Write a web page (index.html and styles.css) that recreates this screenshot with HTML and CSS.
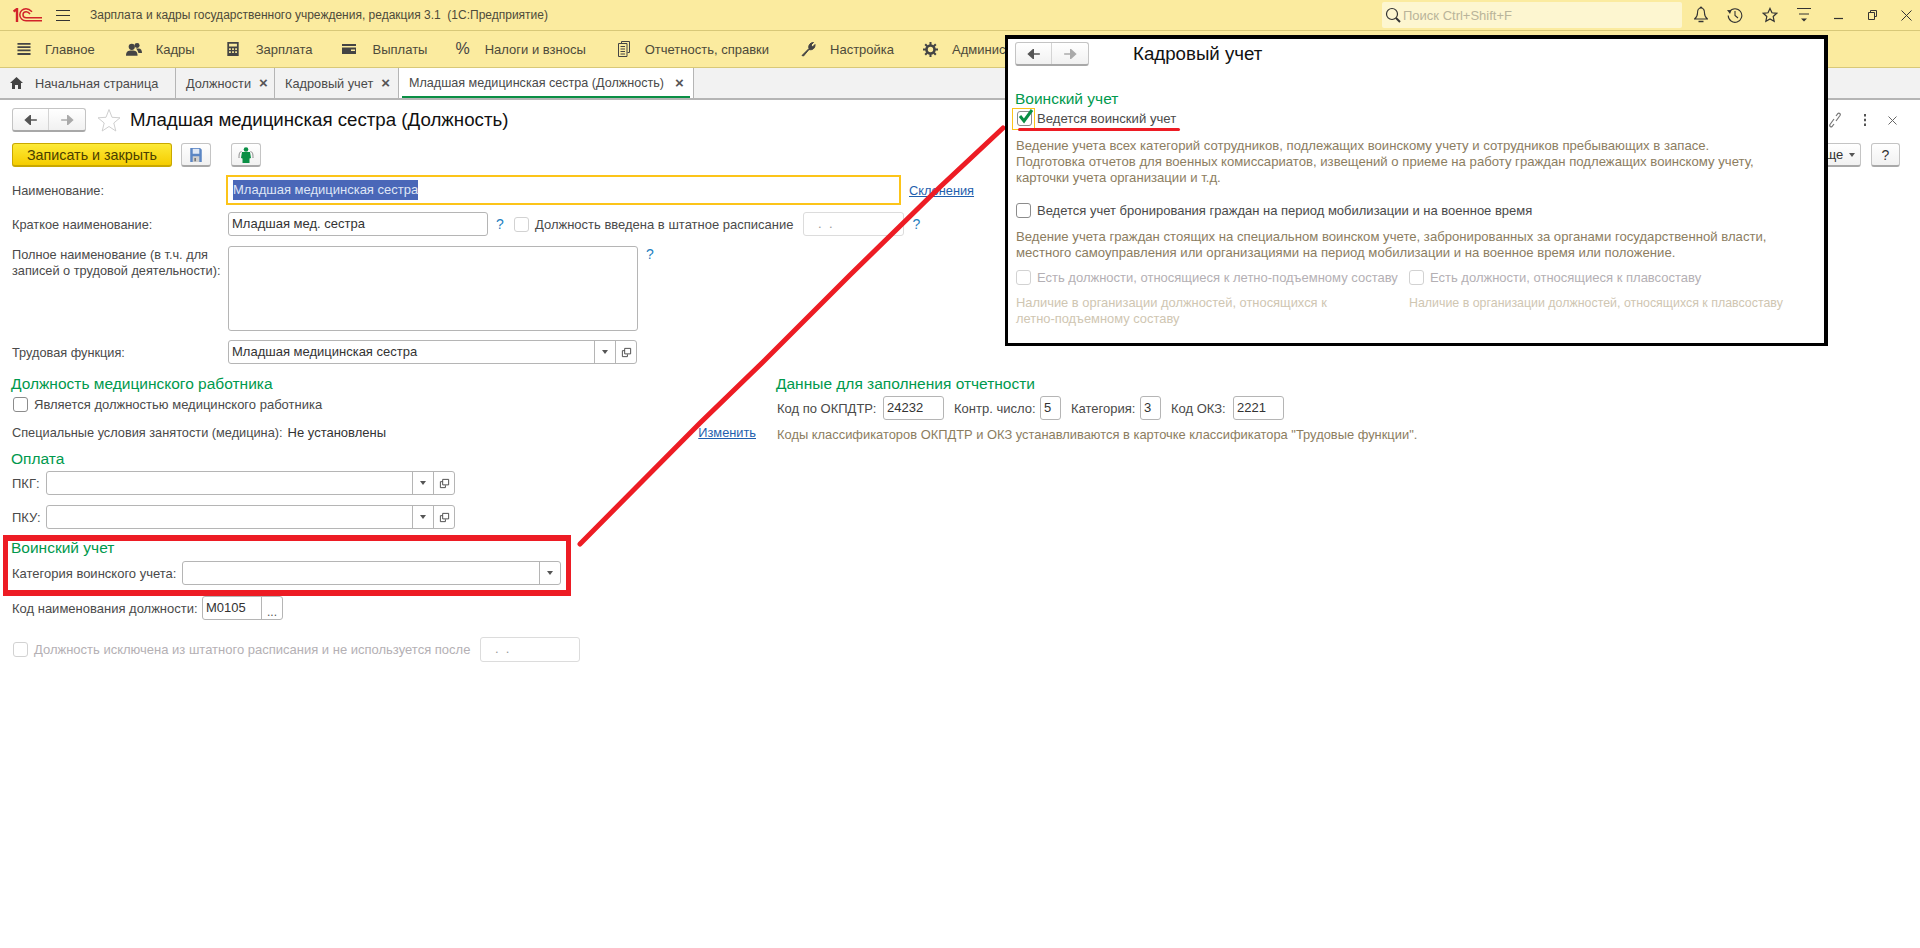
FILE: index.html
```html
<!DOCTYPE html>
<html lang="ru">
<head>
    <meta charset="UTF-8">
    <title>Младшая медицинская сестра (Должность)</title>
    <link rel="stylesheet" href="styles.css">
</head>
<body>
    <svg width="0" height="0" class="defs">
        <symbol id="arrow-left" viewBox="0 0 16 12"><path d="M1 6h14M7 1L1.500 6 7 11z" fill="currentColor" stroke="currentColor" stroke-width="2"/></symbol>
        <symbol id="arrow-right" viewBox="0 0 16 12"><path d="M15 6H1M9 1l5.500 5L9 11z" fill="currentColor" stroke="currentColor" stroke-width="2"/></symbol>
        <symbol id="open" viewBox="0 0 12 12"><path d="M4 1.500h6.500v6H4zM4 4H1.500v6.500H7V8" fill="none" stroke="#444" stroke-width="1"/></symbol>
    </svg>

    <header class="titlebar">
        <svg class="logo" width="29" height="14" viewBox="0 0 29 14">
            <path d="M0.500 3.500L4 1V14" fill="none" stroke="#d2232a" stroke-width="2.400"/>
            <path d="M19 3.800C17 1.800 15.500 .8 13 .8 9.500 .8 6.800 3.500 6.800 6.800S9.500 12.800 13 12.800H29" fill="none" stroke="#d2232a" stroke-width="1.500"/>
            <path d="M17 6C16 4.500 15 3.800 13.200 3.800 11.500 3.800 10 5 10 6.800S11.500 9.800 13.200 9.800H29" fill="none" stroke="#d2232a" stroke-width="1.500"/>
        </svg>
        <svg class="burger" width="14" height="11" viewBox="0 0 14 11"><path d="M0 .5h14M0 5.500h14M0 10.500h14" stroke="#333" stroke-width="1"/></svg>
        <span class="app-name">Зарплата и кадры государственного учреждения, редакция 3.1&nbsp; (1С:Предприятие)</span>
        <div class="search">
            <svg width="17" height="17" viewBox="0 0 17 17"><circle cx="7" cy="7" r="5.500" fill="none" stroke="#333" stroke-width="1.200"/><path d="M11 11l4 4" stroke="#333" stroke-width="2"/></svg>
            <span>Поиск Ctrl+Shift+F</span>
        </div>
        <div class="sys-icons">
            <svg width="14" height="18" viewBox="0 0 14 18"><path d="M7 2C4.500 2 3.500 4 3.500 7c0 2.500-1 4.500-3 6h13c-2-1.500-3-3.500-3-6 0-3-1-5-3.500-5zM6 2c0-1.300 2-1.300 2 0" fill="none" stroke="#333" stroke-width="1.100"/><path d="M4.500 15.500h5" stroke="#333" stroke-width="1.500"/></svg>
            <svg width="16" height="16" viewBox="0 0 16 16"><path d="M2.500 4.500A6.800 6.800 0 1 1 1.200 8.500M8 4v4.500l3 2.500" fill="none" stroke="#333" stroke-width="1.100"/><path d="M0 3l4.500 .3L3 7z" fill="#333"/></svg>
            <svg width="16" height="16" viewBox="0 0 17 17"><path d="M8.500 1.500l2.100 4.600 5 .6-3.700 3.400 1 5-4.400-2.500-4.400 2.500 1-5L1.400 6.700l5-.6z" fill="none" stroke="#333" stroke-width="1.300"/></svg>
            <svg width="14" height="18" viewBox="0 0 14 18"><path d="M0 2.500h14M2 8h10" stroke="#333" stroke-width="1"/><path d="M4 12.500h6l-3 3z" fill="#333"/></svg>
            <svg class="win-min" width="9" height="12" viewBox="0 0 9 12"><path d="M0 9.500h9" stroke="#333" stroke-width="1.200"/></svg>
            <svg class="win-restore" width="9" height="10" viewBox="0 0 9 10"><path d="M2.500 2V.5h6v6H7M.5 2.500h6v7h-6z" fill="none" stroke="#333" stroke-width="1"/></svg>
            <svg class="win-close" width="11" height="11" viewBox="0 0 11 11"><path d="M.5.5l10 10M10.500.5l-10 10" stroke="#333" stroke-width="1"/></svg>
        </div>
    </header>

    <nav class="menubar">
        <a class="menu-item item-main"><svg width="14" height="14" viewBox="0 0 14 15"><path d="M0 2h14M0 5.500h14M0 9h14M0 12.800h14" stroke="#444" stroke-width="2"/></svg>Главное</a>
        <a class="menu-item item-staff"><svg width="16" height="15" viewBox="0 0 18 16"><circle cx="6.500" cy="5" r="3.500" fill="#444"/><path d="M0 15c0-5 2-6 6.500-6s6.500 1 6.500 6z" fill="#444"/><circle cx="12.500" cy="3.500" r="2.800" fill="#444"/><path d="M11 7h3c3 0 4 2 4 5h-4c-.5-2-1.500-4-3-5z" fill="#444"/></svg>Кадры</a>
        <a class="menu-item item-pay"><svg width="12" height="14" viewBox="0 0 13 16"><path fill-rule="evenodd" d="M0 0h13v16H0zM2 2v3h9V2zM2 7v2h2V7zM5.500 7v2h2V7zM9 7v2h2V7zM2 10.500v2h2v-2zM5.500 10.500v2h2v-2zM9 10.500v2h2v-2z" fill="#444"/></svg>Зарплата</a>
        <a class="menu-item item-out"><svg width="14" height="10" viewBox="0 0 14 10"><path fill-rule="evenodd" d="M0 0h14v2H0zM0 3.500h14V10H0zM9 5.500v1.500h4V5.500z" fill="#444"/></svg>Выплаты</a>
        <a class="menu-item item-tax"><span class="percent">%</span>Налоги и взносы</a>
        <a class="menu-item item-rep"><svg width="12" height="16" viewBox="0 0 12 16"><path d="M3.500 2.500V.5h8v11h-2M.5 2.500h8.500v13H.5zM2.500 5.500h4.500M2.500 8h4.500M2.500 10.500h4.500M2.500 13h4.500" fill="none" stroke="#444" stroke-width="1"/></svg>Отчетность, справки</a>
        <a class="menu-item item-set"><svg width="16" height="16" viewBox="0 0 16 16"><path d="M2 14.500L9 7.500c-1-2 .5-6 4.500-6L11 4l1.500 2L15 3.500c.3 4-3 6-6 5l-5.500 6.500z" fill="#444" stroke="#444"/></svg>Настройка</a>
        <a class="menu-item item-adm"><svg width="15" height="15" viewBox="0 0 15 15"><circle cx="7.500" cy="7.500" r="4" fill="none" stroke="#444" stroke-width="2.600"/><path d="M7.500 0v3M7.500 12v3M0 7.500h3M12 7.500h3M2.200 2.200l2 2M10.800 10.800l2 2M12.800 2.200l-2 2M4.200 10.800l-2 2" stroke="#444" stroke-width="2"/></svg>Администрирование</a>
    </nav>

    <div class="tabs">
        <div class="tab tab-home"><svg width="13" height="12" viewBox="0 0 13 12"><path d="M6.500 0L0 6h2v6h3V8h3v4h3V6h2z" fill="#444"/></svg>Начальная страница</div>
        <div class="tab tab-pos">Должности<span class="tab-close">×</span></div>
        <div class="tab tab-hr">Кадровый учет<span class="tab-close">×</span></div>
        <div class="tab tab-active">Младшая медицинская сестра (Должность)<span class="tab-close">×</span></div>
    </div>

    <main class="content">
        <div class="form-head">
            <div class="nav-group">
                <span class="nav-btn nav-back"><svg width="14" height="10"><use href="#arrow-left"/></svg></span>
                <span class="nav-btn nav-next"><svg width="14" height="10"><use href="#arrow-right"/></svg></span>
            </div>
            <svg class="fav" width="24" height="24" viewBox="0 0 24 24"><path d="M12 1.500l3 7.800 8 .5-6.200 5.200 2 8L12 18.500 5.200 23l2-8L1 9.800l8-.5z" fill="#fff" stroke="#cfcfcf" stroke-width="1"/></svg>
            <h1 class="form-title">Младшая медицинская сестра (Должность)</h1>
            <div class="head-icons">
                <svg width="14" height="16" viewBox="0 0 14 16"><path d="M8 4l2-2.500c1-1 3 .5 2 2L8 9M6 12l-2 2.500c-1 1-3-.5-2-2L6 7" fill="none" stroke="#777" stroke-width="1.200"/></svg>
                <svg width="4" height="12" viewBox="0 0 4 12"><path d="M2 0v2.500M2 4.700v2.500M2 9.500V12" stroke="#555" stroke-width="2"/></svg>
                <svg width="9" height="9" viewBox="0 0 9 9"><path d="M.5.5l8 8M8.500.5l-8 8" stroke="#666" stroke-width="1"/></svg>
            </div>
        </div>

        <div class="toolbar">
            <button class="btn btn-primary">Записать и закрыть</button>
            <button class="btn btn-icon btn-save">
                <svg width="12" height="14" viewBox="0 0 14 17"><path d="M0 0h12l2 2v15H0z" fill="#5b86c4"/><path d="M3 1h8v6H3z" fill="#dfe8f5"/><path d="M3 10h8v7H3z" fill="#cfcfcf"/><path d="M5 12h2v4H5z" fill="#777"/></svg>
            </button>
            <button class="btn btn-icon btn-person">
                <svg width="16" height="16" viewBox="0 0 16 16"><path d="M3.500 4.500C1.500 5 1 6.500 1 11M12.500 4.500c2 .5 2.500 2 2.500 6.500" fill="none" stroke="#888" stroke-width="1"/><circle cx="8" cy="2.500" r="2.300" fill="#0a8f45"/><path d="M4 5h8l1 6-1.500 .5V16h-7v-4.500L3 11z" fill="#0a8f45"/></svg>
            </button>
            <div class="toolbar-right">
                <button class="btn btn-more">Еще<i class="caret"></i></button>
                <button class="btn btn-help">?</button>
            </div>
        </div>

        <div class="row row-name">
            <label class="label label-top">Наименование:</label>
            <div class="field field-focus"><span class="selected">Младшая медицинская сестра</span></div>
            <a class="link link-decl">Склонения</a>
        </div>
        <div class="row row-short">
            <label class="label">Краткое наименование:</label>
            <div class="field field-short">Младшая мед. сестра</div>
            <span class="hint-mark">?</span>
            <span class="check check-off check-staff"></span>
            <span class="check-text">Должность введена в штатное расписание</span>
            <div class="field field-date field-off">&nbsp;.&nbsp;&nbsp;.</div>
            <span class="hint-mark">?</span>
        </div>
        <div class="row row-full">
            <label class="label label-two">Полное наименование (в т.ч. для записей о трудовой деятельности):</label>
            <div class="field field-area"></div>
            <span class="hint-mark hint-area">?</span>
        </div>
        <div class="row row-func">
            <label class="label">Трудовая функция:</label>
            <div class="field field-combo field-func">
                <span class="combo-text">Младшая медицинская сестра</span>
                <span class="combo-btn"><i class="caret"></i></span>
                <span class="combo-btn"><svg width="11" height="11"><use href="#open"/></svg></span>
            </div>
        </div>

        <div class="columns">
            <section class="col-left">
                <h2 class="group">Должность медицинского работника</h2>
                <div class="check-row">
                    <span class="check"></span>
                    <span class="check-text">Является должностью медицинского работника</span>
                </div>
                <div class="special-row">
                    <span class="label-special">Специальные условия занятости (медицина):</span>
                    <span class="value">Не установлены</span>
                    <a class="link link-change">Изменить</a>
                </div>
                <h2 class="group group-pay">Оплата</h2>
                <div class="row row-pkg">
                    <label class="label-plain">ПКГ:</label>
                    <div class="field field-combo field-pkg">
                        <span class="combo-text"></span>
                        <span class="combo-btn"><i class="caret"></i></span>
                        <span class="combo-btn"><svg width="11" height="11"><use href="#open"/></svg></span>
                    </div>
                </div>
                <div class="row row-pku">
                    <label class="label-plain">ПКУ:</label>
                    <div class="field field-combo field-pkg">
                        <span class="combo-text"></span>
                        <span class="combo-btn"><i class="caret"></i></span>
                        <span class="combo-btn"><svg width="11" height="11"><use href="#open"/></svg></span>
                    </div>
                </div>
                <h2 class="group group-war">Воинский учет</h2>
                <div class="row row-cat">
                    <label class="label-plain">Категория воинского учета:</label>
                    <div class="field field-combo field-cat">
                        <span class="combo-text"></span>
                        <span class="combo-btn"><i class="caret"></i></span>
                    </div>
                </div>
                <div class="row row-code">
                    <label class="label-plain">Код наименования должности:</label>
                    <div class="field field-combo field-code">
                        <span class="combo-text">М0105</span>
                        <span class="combo-btn dots">...</span>
                    </div>
                </div>
                <div class="row row-excl">
                    <span class="check check-off"></span>
                    <span class="check-text text-off">Должность исключена из штатного расписания и не используется после</span>
                    <div class="field field-date field-off field-excl">&nbsp;.&nbsp;&nbsp;.</div>
                </div>
            </section>

            <section class="col-right">
                <h2 class="group">Данные для заполнения отчетности</h2>
                <div class="row row-codes">
                    <label class="label-plain code-a">Код по ОКПДТР:</label>
                    <div class="field field-code-a">24232</div>
                    <label class="label-plain code-b">Контр. число:</label>
                    <div class="field field-code-b">5</div>
                    <label class="label-plain code-c">Категория:</label>
                    <div class="field field-code-b">3</div>
                    <label class="label-plain code-d">Код ОКЗ:</label>
                    <div class="field field-code-c">2221</div>
                </div>
                <p class="note note-codes">Коды классификаторов ОКПДТР и ОКЗ устанавливаются в карточке классификатора "Трудовые функции".</p>
            </section>
        </div>
    </main>

    <!-- red marks drawn on top of the screenshot -->
    <svg class="mark-line" width="1920" height="948" viewBox="0 0 1920 948">
        <path d="M580 544L700 423 765 360 850 275 940 187 1003 128" fill="none" stroke="#ed1c24" stroke-width="5" stroke-linecap="round"/>
    </svg>
    <div class="mark-box"></div>

    <aside class="inset">
        <div class="inset-head">
            <div class="nav-group">
                <span class="nav-btn nav-back"><svg width="14" height="10"><use href="#arrow-left"/></svg></span>
                <span class="nav-btn nav-next"><svg width="14" height="10"><use href="#arrow-right"/></svg></span>
            </div>
            <h2 class="inset-title">Кадровый учет</h2>
        </div>
        <h2 class="group inset-group">Воинский учет</h2>
        <div class="check-row inset-check-a">
            <span class="check-focus">
                <span class="check check-on">
                    <svg width="16" height="15" viewBox="0 0 16 15"><path d="M2 7l4 5 8-11" fill="none" stroke="#0a8f45" stroke-width="3"/></svg>
                </span>
            </span>
            <span class="check-text">Ведется воинский учет</span>
            <i class="mark-under"></i>
        </div>
        <p class="note inset-note inset-note-a">Ведение учета всех категорий сотрудников, подлежащих воинскому учету и сотрудников пребывающих в запасе.<br>Подготовка отчетов для военных комиссариатов, извещений о приеме на работу граждан подлежащих воинскому учету,<br>карточки учета организации и т.д.</p>
        <div class="check-row inset-check-b">
            <span class="check"></span>
            <span class="check-text">Ведется учет бронирования граждан на период мобилизации и на военное время</span>
        </div>
        <p class="note inset-note inset-note-b">Ведение учета граждан стоящих на специальном воинском учете, забронированных за органами государственной власти,<br>местного самоуправления или организациями на период мобилизации и на военное время или положение.</p>
        <div class="inset-cols">
            <div class="inset-col">
                <div class="check-row">
                    <span class="check check-off"></span>
                    <span class="check-text text-off">Есть должности, относящиеся к летно-подъемному составу</span>
                </div>
                <p class="note note-off">Наличие в организации должностей, относящихся к<br>летно-подъемному составу</p>
            </div>
            <div class="inset-col">
                <div class="check-row">
                    <span class="check check-off"></span>
                    <span class="check-text text-off text-short">Есть должности, относящиеся к плавсоставу</span>
                </div>
                <p class="note note-off note-short">Наличие в организации должностей, относящихся к плавсоставу</p>
            </div>
        </div>
    </aside>
</body>
</html>
```

FILE: styles.css
```css
* {
    box-sizing: border-box;
}
html, body {
    margin: 0;
    height: 948px;
    overflow: hidden;
}
body {
    position: relative;
    font-family: "Liberation Sans", Arial, sans-serif;
    font-size: 13px;
    color: #4a4a4a;
    background: #fff;
}
.defs {
    position: absolute;
}

/* title and menu */
.titlebar {
    height: 31px;
    display: flex;
    align-items: center;
    background: #fbeb9f;
    border-bottom: 1px solid #d8c878;
    padding-left: 13px;
}
.burger {
    margin-left: 14px;
}
.app-name {
    margin-left: 20px;
    font-size: 12px;
    color: #4d4a3a;
}
.search {
    margin-left: auto;
    width: 300px;
    height: 26px;
    display: flex;
    align-items: center;
    gap: 1px;
    background: #fdf6d0;
    border-radius: 2px;
    padding-left: 3px;
    color: #b9b49a;
}
.sys-icons {
    width: 238px;
    display: flex;
    align-items: center;
    gap: 19px;
    padding-left: 12px;
}
.win-min {
    margin-left: 4px;
}
.win-restore {
    margin-left: 6px;
}
.win-close {
    margin-left: 5px;
}
.menubar {
    height: 37px;
    display: flex;
    align-items: center;
    background: #fbeb9f;
    border-bottom: 1px solid #d8c878;
    overflow: hidden;
}
.menu-item {
    display: flex;
    align-items: center;
    color: #4d4a3a;
    white-space: nowrap;
}
.item-main { margin-left: 17px; }
.item-main svg { margin-right: 14px; }
.item-staff { margin-left: 31px; }
.item-staff svg { margin-right: 14px; }
.item-pay { margin-left: 32px; }
.item-pay svg { margin-right: 17px; }
.item-out { margin-left: 29px; }
.item-out svg { margin-right: 17px; }
.item-tax { margin-left: 28px; }
.item-rep { margin-left: 32px; }
.item-rep svg { margin-right: 15px; }
.item-set { margin-left: 31px; }
.item-set svg { margin-right: 14px; }
.item-adm { margin-left: 29px; }
.item-adm svg { margin-right: 14px; }
.percent {
    font-size: 16px;
    margin-right: 15px;
    color: #444;
}

/* tabs */
.tabs {
    height: 32px;
    display: flex;
    background: #f2f2f2;
    border-bottom: 2px solid #b5b5b5;
    font-size: 12.750px;
}
.tab {
    display: flex;
    align-items: center;
    border-right: 1px solid #b5b5b5;
    padding-left: 10px;
    white-space: nowrap;
}
.tab-home { width: 176px; }
.tab-home svg { margin-right: 12px; }
.tab-pos { width: 99px; }
.tab-hr { width: 124px; }
.tab-active {
    width: 295px;
    font-size: 12.600px;
    background: #fff;
    position: relative;
}
.tab-active::after {
    content: "";
    position: absolute;
    left: 3px;
    right: 3px;
    bottom: 0;
    height: 2px;
    background: #0a8f45;
}
.tab-close {
    margin-left: 8px;
    font-size: 15px;
    font-weight: bold;
    color: #555;
    line-height: 12px;
}
.tab-active .tab-close {
    margin-left: 11px;
}

/* form */
.content {
    padding: 8px 20px 0 12px;
}
.form-head {
    height: 24px;
    display: flex;
    align-items: center;
}
.nav-group {
    width: 74px;
    height: 24px;
    display: flex;
    border: 1px solid #c4c4c4;
    border-bottom: 2px solid #a8a8a8;
    border-radius: 3px;
    background: linear-gradient(#fff, #f1f1f1);
}
.nav-btn {
    width: 50%;
    display: flex;
    align-items: center;
    justify-content: center;
}
.nav-back {
    color: #555;
    border-right: 1px solid #d4d4d4;
}
.nav-next {
    color: #aaa;
}
.fav {
    margin-left: 11px;
}
.form-title {
    margin: 0 0 0 9px;
    font-size: 18.700px;
    font-weight: normal;
    color: #111;
}
.head-icons {
    margin: 0 3px 0 auto;
    display: flex;
    align-items: center;
    gap: 21px;
}
.toolbar {
    height: 24px;
    margin-top: 11px;
    display: flex;
}
.btn {
    height: 24px;
    padding: 0;
    border: 1px solid #c4c4c4;
    border-bottom: 2px solid #a8a8a8;
    border-radius: 3px;
    background: linear-gradient(#fff, #f1f1f1);
    font: 13px "Liberation Sans", Arial, sans-serif;
    color: #333;
    display: flex;
    align-items: center;
    justify-content: center;
}
.btn-primary {
    width: 160px;
    font-size: 14.300px;
    color: #4a4000;
    border-color: #c9a800;
    background: linear-gradient(#fdea38, #f5cd00);
}
.btn-icon {
    width: 30px;
}
.btn-save {
    margin-left: 9px;
}
.btn-person {
    margin-left: 20px;
}
.toolbar-right {
    margin-left: auto;
    display: flex;
    gap: 10px;
}
.btn-more {
    width: 50px;
}
.btn-more .caret {
    margin-left: 6px;
}
.btn-help {
    width: 29px;
    font-size: 14px;
}
.row {
    display: flex;
    align-items: center;
}
.label {
    width: 216px;
    flex: none;
    font-size: 12.750px;
}
.label-top {
    width: 214px;
}
.label-two {
    align-self: flex-start;
    line-height: 16px;
    padding: 1px 0 0;
}
.label-plain {
    white-space: nowrap;
}
.field {
    height: 24px;
    line-height: 22px;
    padding-left: 3px;
    border: 1px solid #b5b5b5;
    border-radius: 3px;
    background: #fff;
    color: #333;
    white-space: nowrap;
}
.row-name {
    height: 30px;
    margin-top: 8px;
}
.field-focus {
    width: 675px;
    height: 30px;
    line-height: 26px;
    border: 2px solid #fcc419;
    border-radius: 0;
    padding-left: 5px;
}
.selected {
    display: inline-block;
    height: 20px;
    line-height: 20px;
    background: #4a67b8;
    color: #dfe5f5;
}
.link {
    font-size: 12.800px;
    color: #1f5fae;
    text-decoration: underline;
}
.link-decl {
    margin-left: 8px;
}
.row-short {
    margin-top: 7px;
}
.field-short {
    width: 260px;
}
.hint-mark {
    margin-left: 8px;
    width: 14px;
    color: #1f7fc0;
    font-size: 14px;
}
.check {
    width: 15px;
    height: 15px;
    flex: none;
    display: block;
    position: relative;
    border: 1px solid #8c8c8c;
    border-radius: 3px;
    background: #fff;
}
.check-off {
    border-color: #d2d2d2;
}
.check-staff {
    margin-left: 4px;
}
.check-text {
    margin-left: 6px;
    white-space: nowrap;
}
.text-off {
    color: #b4b0b4;
}
.field-date {
    width: 101px;
}
.field-off {
    border-color: #dcdcdc;
    color: #999;
    margin-left: 10px;
    padding-left: 10px;
}
.row-full {
    margin-top: 10px;
    align-items: flex-start;
}
.field-area {
    width: 410px;
    height: 85px;
}
.row-func {
    margin-top: 9px;
}
.field-combo {
    display: flex;
    padding-left: 0;
}
.combo-text {
    flex: 1;
    padding-left: 3px;
}
.combo-btn {
    width: 21px;
    flex: none;
    display: flex;
    align-items: center;
    justify-content: center;
    border-left: 1px solid #b5b5b5;
}
.caret {
    width: 0;
    height: 0;
    display: block;
    border-left: 3px solid transparent;
    border-right: 3px solid transparent;
    border-top: 4px solid #555;
}
.dots {
    align-items: flex-end;
    line-height: 14px;
    font-size: 12px;
    color: #555;
}
.field-func {
    width: 409px;
}
.columns {
    display: flex;
    gap: 21px;
    margin-top: 10px;
}
.col-left {
    width: 744px;
    flex: none;
}
.group {
    margin: 0 0 0 -1px;
    height: 20px;
    line-height: 20px;
    font-size: 15.500px;
    font-weight: normal;
    color: #00994d;
    white-space: nowrap;
}
.check-row {
    display: flex;
    align-items: center;
    position: relative;
}
.col-left > .check-row {
    margin: 3px 0 0 1px;
}
.special-row {
    height: 20px;
    margin-top: 10px;
    display: flex;
    align-items: center;
}
.label-special {
    font-size: 12.750px;
}
.value {
    margin-left: 5px;
    color: #333;
}
.link-change {
    margin-left: auto;
}
.group-pay {
    margin-top: 7px;
}
.row-pkg {
    margin-top: 2px;
}
.row-pku {
    margin-top: 10px;
}
.row-pkg .label-plain, .row-pku .label-plain {
    width: 34px;
}
.group-war {
    margin-top: 9px;
}
.row-cat {
    margin-top: 3px;
}
.row-cat .label-plain {
    width: 170px;
}
.field-cat {
    width: 379px;
}
.field-pkg {
    width: 409px;
}
.row-code {
    margin-top: 11px;
}
.row-code .label-plain {
    width: 190px;
}
.field-code {
    width: 81px;
}
.row-excl {
    margin: 17px 0 0 1px;
}
.field-excl {
    width: 100px;
    margin-left: 10px;
    height: 25px;
}
.row-codes {
    margin-top: 2px;
}
.row-codes .field {
    margin-right: 10px;
}
.code-a { width: 106px; }
.code-b { width: 86px; }
.code-c { width: 69px; }
.code-d { width: 62px; }
.field-code-a {
    width: 61px;
}
.field-code-b {
    width: 21px;
}
.field-code-c {
    width: 51px;
}
.note {
    margin: 0;
    font-size: 12.900px;
    line-height: 16px;
    color: #8c7d5f;
    white-space: nowrap;
}
.note-codes {
    margin-top: 7px;
}

/* annotations over the form */
.mark-line {
    position: absolute;
    left: 0;
    top: 0;
    pointer-events: none;
}
.mark-box {
    position: absolute;
    left: 3px;
    top: 535px;
    width: 568px;
    height: 61px;
    border: 5px solid #ed1c24;
    border-top-width: 6px;
    border-bottom-width: 6px;
}
.inset {
    position: absolute;
    left: 1005px;
    top: 35px;
    width: 823px;
    height: 311px;
    background: #fff;
    border: 3px solid #000;
    border-width: 4px 4px 3px 3px;
    padding: 3px 0 0 8px;
}
.inset-head {
    height: 24px;
    display: flex;
    align-items: center;
}
.inset-head .nav-group {
    margin-left: -1px;
}
.inset-title {
    margin: 0 0 0 44px;
    font-size: 18.700px;
    font-weight: normal;
    color: #111;
}
.inset-group {
    margin-top: 23px;
}
.inset-check-a {
    margin: 2px 0 0 1px;
    height: 15px;
}
.check-focus {
    flex: none;
    display: block;
    padding: 2px 3px 2px 4px;
    margin: -3px 0 -3px -5px;
    border: 1px solid #fcc419;
    width: 23px;
    height: 22px;
}
.check-focus .check {
    width: 15px;
    height: 15px;
    margin: 0;
}
.check-on svg {
    position: absolute;
    left: 0;
    top: -3px;
}
.mark-under {
    position: absolute;
    left: 1px;
    top: 17px;
    width: 162px;
    height: 3px;
    border-radius: 2px;
    background: #ed1c24;
}
.inset-check-a .check-text {
    margin-left: 2px;
    font-size: 13.150px;
}
.inset-note {
    font-size: 13.150px;
}
.inset-note-a {
    margin-top: 12px;
}
.inset-check-b {
    margin-top: 17px;
}
.inset-note-b {
    margin-top: 11px;
}
.inset-cols {
    display: flex;
    margin-top: 9px;
}
.inset-col {
    flex: none;
}
.inset-col:first-child {
    width: 393px;
}
.note-off {
    margin-top: 10px;
    color: #cfc6b2;
}
.note-short {
    font-size: 12.400px;
}
```
